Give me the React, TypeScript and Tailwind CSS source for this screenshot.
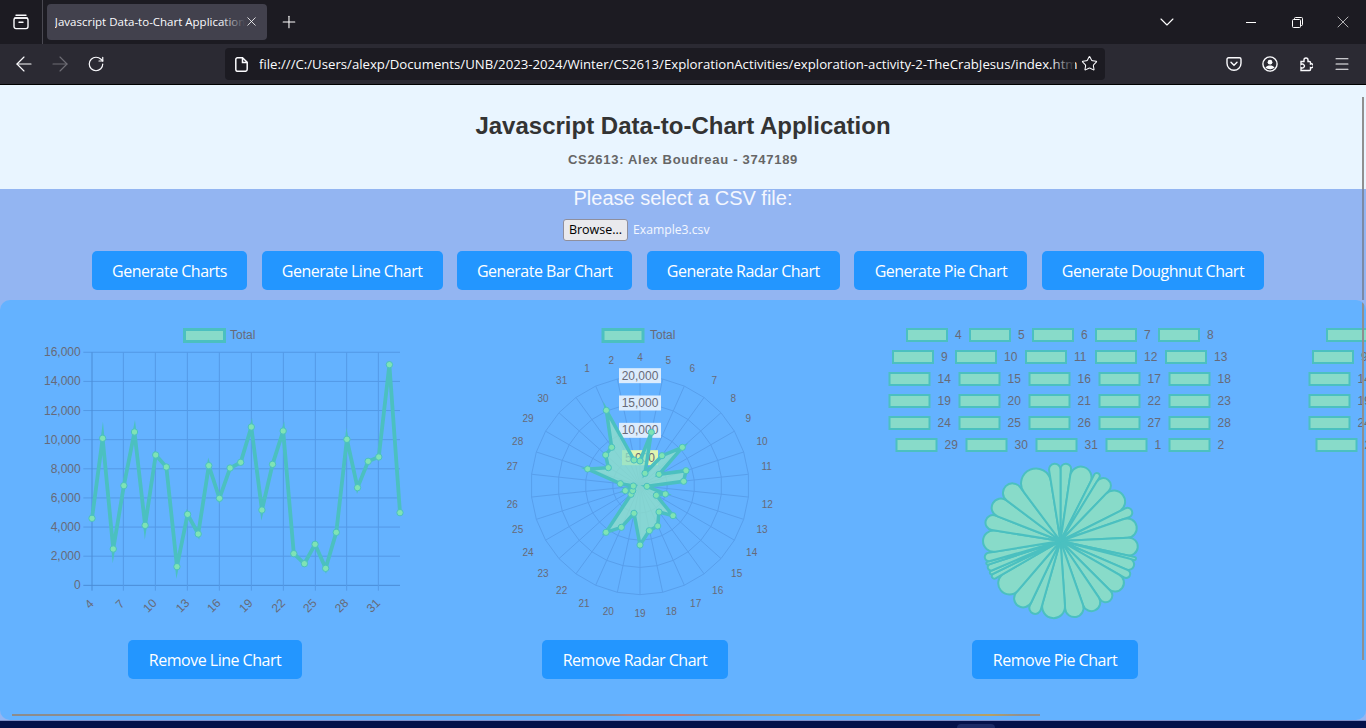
import { ArrowLeft, ArrowRight, ChevronDown, Menu, Plus, RotateCw, Star, X } from "lucide-react";

const zLine: number[] = [595, 355, 687, 497, 336, 616, 405, 441, 740, 583, 642, 437, 535, 444, 427, 321, 570, 433, 333, 701, 731, 673, 745, 637, 358, 503, 424, 411, 134, 578];
const labels: string[] = [...Array.from({ length: 28 }, (_, i) => String(i + 4)), "1", "2"];
const values: number[] = zLine.map((z) => ((796 - z) / 699) * 16000);

const TEAL = "#4bc0c0";
const FILL = "#88dbc9";
const POINT = "#7fe3b4";
const GRID = "#5399e6";
const RGRID = "#589fec";
const TXT = "#676a78";
const font = "'Liberation Sans', Arial, sans-serif";

const lx = (zx: number) => 25 + zx / 3;
const ly = (zy: number) => 20 + zy / 3;
const rx = (zx: number) => 65 + zx / 3;

function T({ x, y, children, anchor = "start", size = 12, transform }: { x: number; y: number; children: React.ReactNode; anchor?: "start" | "middle" | "end"; size?: number; transform?: string }) {
  return (
    <text x={x} y={y} textAnchor={anchor} fontSize={size} fontFamily={font} fill={TXT} dominantBaseline="central" transform={transform}>
      {children}
    </text>
  );
}

function LineChart() {
  const xs = zLine.map((_, i) => 186 + (i * (1110 - 186)) / 29);
  const pts = zLine.map((z, i) => `${lx(xs[i])},${ly(z)}`).join(" ");
  const xTicks: [string, number, number, number][] = [
    ["4", 186, 178, 852], ["7", 280, 270, 852], ["10", 376, 360, 857], ["13", 472, 458, 857], ["16", 568, 552, 857],
    ["19", 664, 648, 857], ["22", 760, 745, 857], ["25", 856, 840, 857], ["28", 950, 935, 857], ["31", 1045, 1030, 857],
  ];
  return (
    <svg viewBox="0 0 420 340" className="block h-[340px] w-[420px] overflow-visible">
      <rect x="179.5" y="29.5" width="40" height="12" fill={FILL} stroke={TEAL} strokeWidth="3" />
      <T x={225} y={35}>Total</T>
      {Array.from({ length: 9 }, (_, i) => {
        const y = ly(796 - i * 87.4);
        return (
          <g key={i}>
            <line x1={lx(160)} x2={lx(1110)} y1={y} y2={y} stroke={i === 0 ? "#4a8cd6" : GRID} strokeWidth="1" />
            <T x={lx(152)} y={y} anchor="end">{(i * 2000).toLocaleString("en-US")}</T>
          </g>
        );
      })}
      {xTicks.map(([t, gx, tx, ty], i) => (
        <g key={t}>
          <line x1={lx(gx)} x2={lx(gx)} y1={ly(97)} y2={ly(812)} stroke={i === 0 ? "#4a8cd6" : GRID} strokeWidth="1" />
          <T x={lx(tx)} y={ly(ty)} anchor="middle" transform={`rotate(-45 ${lx(tx)} ${ly(ty)})`}>{t}</T>
        </g>
      ))}
      <polyline points={pts} fill="none" stroke={TEAL} strokeWidth="3.8" strokeLinejoin="miter" strokeMiterlimit="10" />
      {zLine.map((z, i) => (
        <circle key={i} cx={lx(xs[i])} cy={ly(z)} r="3.2" fill={POINT} stroke={TEAL} strokeWidth="1" />
      ))}
    </svg>
  );
}

const radarPts: [number, number][] = [
  [450, 423], [484, 337], [465, 460], [516, 407], [577, 382], [507, 463], [588, 452], [581, 484], [471, 499], [526, 522],
  [499, 526], [549, 587], [507, 576], [503, 618], [478, 632], [450, 675], [432, 580], [394, 622], [348, 637], [423, 523],
  [428, 512], [406, 512], [430, 498], [391, 491], [293, 447], [355, 443], [347, 405], [365, 382], [349, 271], [432, 420],
];
const radarLabels: [string, number, number][] = [
  ["4", 450, 113], ["5", 535, 122], ["6", 607, 146], ["7", 673, 181], ["8", 730, 236], ["9", 775, 295], ["10", 816, 365], ["11", 830, 440],
  ["12", 832, 553], ["13", 816, 628], ["14", 785, 697], ["15", 740, 760], ["16", 683, 812], ["17", 617, 850], ["18", 544, 875], ["19", 450, 880],
  ["20", 355, 875], ["21", 282, 850], ["22", 215, 812], ["23", 159, 760], ["24", 114, 697], ["25", 83, 628], ["26", 67, 553], ["27", 67, 440],
  ["28", 83, 365], ["29", 114, 295], ["30", 159, 236], ["31", 215, 181], ["1", 291, 146], ["2", 364, 122],
];

function RadarChart() {
  const cx = 215;
  const cy = ly(497);
  const ring = (r: number) =>
    Array.from({ length: 30 }, (_, i) => {
      const a = (i * 12 * Math.PI) / 180;
      return `${cx + r * Math.sin(a)},${cy - r * Math.cos(a)}`;
    }).join(" ");
  return (
    <svg viewBox="0 0 420 340" className="block h-[340px] w-[420px] overflow-visible">
      <rect x="178" y="29.5" width="40" height="12" fill={FILL} stroke={TEAL} strokeWidth="3" />
      <T x={225} y={35}>Total</T>
      {[27.25, 54.5, 81.75, 109].map((r) => (
        <polygon key={r} points={ring(r)} fill="none" stroke={RGRID} strokeWidth="1" />
      ))}
      {Array.from({ length: 30 }, (_, i) => {
        const a = (i * 12 * Math.PI) / 180;
        return <line key={i} x1={cx} y1={cy} x2={cx + 109 * Math.sin(a)} y2={cy - 109 * Math.cos(a)} stroke={RGRID} strokeWidth="1" />;
      })}
      {[["5,000", 413, "#e0f5b0"], ["10,000", 331, "#dcecfd"], ["15,000", 249, "#dcecfd"], ["20,000", 167, "#dcecfd"]].map(([t, z, c]) => (
        <g key={t as string}>
          <rect x={t === "5,000" ? cx - 18 : cx - 21} y={ly(z as number) - 7.5} width={t === "5,000" ? 36 : 42} height="15" fill={c as string} />
          <T x={cx} y={ly(z as number)} anchor="middle">{t}</T>
        </g>
      ))}
      <polygon points={radarPts.map(([x, y]) => `${rx(x)},${ly(y)}`).join(" ")} fill="#8fe0c8" fillOpacity="0.78" stroke={TEAL} strokeWidth="3.5" strokeMiterlimit="6" />
      {radarPts.map(([x, y], i) => (
        <circle key={i} cx={rx(x)} cy={ly(y)} r="3.1" fill={POINT} stroke={TEAL} strokeWidth="1" />
      ))}
      {radarLabels.map(([t, x, y]) => (
        <T key={t} x={rx(x)} y={ly(y)} anchor="middle" size={10}>{t}</T>
      ))}
    </svg>
  );
}

function sliceParts() {
  const total = values.reduce((a, b) => a + b, 0);
  const R = 77.5;
  let ang = 0;
  return values.map((v) => {
    const da = (v / total) * Math.PI * 2;
    const a0 = ang;
    const a1 = ang + da;
    ang = a1;
    const s = Math.sin(da / 2);
    const r = Math.min(15, (R * s) / (1 + s));
    const d = Math.sqrt((R - r) * (R - r) - r * r);
    const delta = Math.asin(r / (R - r));
    const p = (rad: number, a: number) => `${(rad * Math.sin(a)).toFixed(2)} ${(-rad * Math.cos(a)).toFixed(2)}`;
    return `M0 0 L${p(d, a0)} A${r} ${r} 0 0 1 ${p(R, a0 + delta)} A${R} ${R} 0 0 1 ${p(R, a1 - delta)} A${r} ${r} 0 0 1 ${p(d, a1)} Z`;
  });
}

function PieLegend() {
  const rows = [labels.slice(0, 5), labels.slice(5, 10), labels.slice(10, 15), labels.slice(15, 20), labels.slice(20, 25), labels.slice(25, 30)];
  const w = (l: string) => (l.length === 1 ? 63 : 70);
  return (
    <>
      {rows.map((row, ri) => {
        const total = row.reduce((a, l) => a + w(l), 0) - 7;
        let x = 215 - total / 2;
        const y = 35 + ri * 22;
        return row.map((l) => {
          const bx = x;
          x += w(l);
          return (
            <g key={l}>
              <rect x={bx + 1} y={y - 6} width="40" height="12" fill={FILL} stroke={TEAL} strokeWidth="2" />
              <T x={bx + 49} y={y}>{l}</T>
            </g>
          );
        });
      })}
    </>
  );
}

function PieChart({ pie = true }: { pie?: boolean }) {
  return (
    <svg viewBox="0 0 420 340" className="block h-[340px] w-[420px] overflow-visible">
      <PieLegend />
      {pie && (
        <g transform="translate(215.5 241)">
          {sliceParts().map((d, i) => (
            <path key={i} d={d} fill={FILL} stroke={TEAL} strokeWidth="2" strokeLinejoin="round" />
          ))}
        </g>
      )}
    </svg>
  );
}

function Btn({ w, children }: { w: string; children: React.ReactNode }) {
  return (
    <button className={`h-[39px] shrink-0 rounded-[5px] bg-[#2396ff] text-center font-['Open_Sans',sans-serif] text-[16px] tracking-[-0.5px] text-white ${w}`}>
      {children}
    </button>
  );
}

function Column({ children, label, w }: { children: React.ReactNode; label?: string; w?: string }) {
  return (
    <div className="flex w-[420px] shrink-0 flex-col items-center">
      {children}
      {label && <Btn w={w ?? ""}>{label}</Btn>}
    </div>
  );
}

export default function App() {
  return (
    <div className="relative flex h-[728px] w-[1366px] flex-col overflow-hidden bg-[#93b5f2] font-['Liberation_Sans',Arial,sans-serif]">
      {/* tab strip */}
      <div className="flex h-[44px] shrink-0 items-center bg-[#1c1b22] text-white">
        <div className="flex h-full w-[43px] items-center justify-center border-r border-[#4a4952]">
          <svg width="16" height="16" viewBox="0 0 16 16" fill="none" stroke="#fbfbfe" strokeWidth="1.4">
            <path d="M3 1.2h10M1.8 4h12.4" strokeLinecap="round" />
            <rect x="1" y="4" width="14" height="10.6" rx="2" />
            <path d="M6 8.2h4" strokeLinecap="round" />
          </svg>
        </div>
        <div className="relative ml-[4px] flex h-[36px] w-[221px] items-center overflow-hidden rounded-[4px] bg-[#42414d] pl-[8px]">
          <span className="w-[191px] overflow-hidden whitespace-nowrap font-['Open_Sans',sans-serif] text-[11.5px] text-[#fbfbfe]">Javascript Data-to-Chart Application</span>
          <div className="absolute right-[22px] top-0 h-full w-[24px] bg-gradient-to-r from-transparent to-[#42414d]" />
          <X className="absolute right-[8px] top-[10px]" size={15} strokeWidth={1.3} />
        </div>
        <Plus className="ml-[12px]" size={20} strokeWidth={1.3} />
        <ChevronDown className="ml-[856px]" size={24} strokeWidth={1.1} />
        <div className="ml-[49px] flex items-center">
          <div className="flex w-[46px] justify-center"><div className="h-px w-[10px] bg-white" /></div>
          <div className="flex w-[46px] justify-center">
            <svg width="11" height="11" viewBox="0 0 11 11" fill="none" stroke="#fff" strokeWidth="1">
              <rect x="0.5" y="2.5" width="8" height="8" rx="1" />
              <path d="M2.5 2.5V1.5a1 1 0 0 1 1-1h6a1 1 0 0 1 1 1v6a1 1 0 0 1-1 1H8.5" />
            </svg>
          </div>
          <div className="flex w-[46px] justify-center"><X size={20} strokeWidth={0.8} /></div>
        </div>
      </div>
      {/* toolbar */}
      <div className="flex h-[41px] shrink-0 items-center border-b border-black bg-[#2b2a33] text-[#fbfbfe]">
        <ArrowLeft className="ml-[12px]" size={24} strokeWidth={1.15} />
        <ArrowRight className="ml-[12px] text-[#6e6d75]" size={24} strokeWidth={1.15} />
        <RotateCw className="ml-[15px]" size={18} strokeWidth={1.6} />
        <div className="relative ml-[120px] flex h-[32px] w-[880px] items-center overflow-hidden rounded-[4px] bg-[#1c1b22] pl-[10px]">
          <svg width="13" height="15" viewBox="0 0 13 15" fill="none" stroke="#fbfbfe" strokeWidth="1.5">
            <path d="M2.5.8h5l4.7 4.5v7a2 2 0 0 1-2 2h-7.7a1.7 1.7 0 0 1-1.7-1.7V2.5A1.7 1.7 0 0 1 2.5.8zM7.5 1v4.5h4.5" />
          </svg>
          <span className="ml-[11px] w-[818px] overflow-hidden whitespace-nowrap pt-px font-['Open_Sans',sans-serif] text-[13.2px] text-[#fbfbfe]">
            file:///C:/Users/alexp/Documents/UNB/2023-2024/Winter/CS2613/ExplorationActivities/exploration-activity-2-TheCrabJesus/index.html
          </span>
          <div className="absolute right-[30px] top-0 h-full w-[24px] bg-gradient-to-r from-transparent to-[#1c1b22]" />
          <Star className="absolute right-[7px] top-[7px]" size={17} strokeWidth={1.5} />
        </div>
        <svg className="ml-[121px]" width="16" height="16" viewBox="0 0 16 16" fill="none" stroke="#fbfbfe" strokeWidth="1.4">
          <path d="M2.5 1.7h11a1.5 1.5 0 0 1 1.5 1.5v4a7 7 0 0 1-14 0v-4a1.5 1.5 0 0 1 1.5-1.5z" />
          <path d="M5 6.2l3 3 3-3" strokeLinecap="round" />
        </svg>
        <svg className="ml-[20px]" width="16" height="16" viewBox="0 0 16 16" fill="none">
          <circle cx="8" cy="8" r="7.1" stroke="#fbfbfe" strokeWidth="1.4" />
          <circle cx="8" cy="6.2" r="2.4" fill="#fbfbfe" />
          <path d="M3.4 11.6c1-1.6 2.7-2.2 4.6-2.2s3.6.6 4.6 2.2c-1.2 1.1-2.8 1.7-4.6 1.7s-3.4-.6-4.6-1.7z" fill="#fbfbfe" />
        </svg>
        <svg className="ml-[20px]" width="15" height="16" viewBox="0 0 15 16" fill="none" stroke="#fbfbfe" strokeWidth="1.4">
          <path d="M1 6h3V4.5a2 2 0 1 1 4 0V6h1.5a1 1 0 0 1 1 1v1.5a2 2 0 1 1 0 3.6V14a1 1 0 0 1-1 1H1v-3a2 2 0 1 0 0-3z" transform="translate(2 -.5)" />
        </svg>
        <Menu className="ml-[20px]" size={18} strokeWidth={1.4} />
      </div>
      {/* header */}
      <div className="flex h-[104px] shrink-0 flex-col items-center bg-[#e9f5ff]">
        <h1 className="mt-[27px] text-[24px] font-bold leading-[28px] text-[#333]">Javascript Data-to-Chart Application</h1>
        <p className="mt-[12px] text-[13px] font-bold leading-[16px] tracking-[0.7px] text-[#666]">CS2613: Alex Boudreau - 3747189</p>
      </div>
      {/* controls */}
      <div className="flex h-[111px] shrink-0 flex-col items-center bg-[#93b5f2]">
        <p className="text-[20px] leading-[18px] text-[#f4f7fe]">Please select a CSV file:</p>
        <div className="mt-[12px] flex h-[22px] w-[240px] items-center self-center">
          <div className="flex h-[22px] w-[65px] items-center justify-center rounded-[3px] border border-[#8f8f9d] bg-[#e9e9ed] pt-px font-['Open_Sans',sans-serif] text-[12.5px] text-black">Browse...</div>
          <span className="ml-[5px] pt-px font-['Open_Sans',sans-serif] text-[12.2px] text-[#f4f7fe]">Example3.csv</span>
        </div>
        <div className="mr-[10px] mt-[10px] flex gap-[14.6px]">
          <Btn w="w-[155px]">Generate Charts</Btn>
          <Btn w="w-[181px]">Generate Line Chart</Btn>
          <Btn w="w-[175px]">Generate Bar Chart</Btn>
          <Btn w="w-[193px]">Generate Radar Chart</Btn>
          <Btn w="w-[173px]">Generate Pie Chart</Btn>
          <Btn w="w-[222px]">Generate Doughnut Chart</Btn>
        </div>
      </div>
      {/* charts panel */}
      <div className="relative h-[420px] shrink-0 overflow-hidden rounded-[10px] bg-[#64b2ff]">
        <div className="flex w-[1690px] pl-[5px]">
          <Column label="Remove Line Chart" w="w-[174px]"><LineChart /></Column>
          <Column label="Remove Radar Chart" w="w-[186px]"><RadarChart /></Column>
          <Column label="Remove Pie Chart" w="w-[166px]"><PieChart /></Column>
          <Column><PieChart pie={false} /></Column>
        </div>
        <div className="absolute bottom-[4px] left-[12px] h-[2px] w-[1028px] bg-[linear-gradient(90deg,#8c8c8c_58%,#b98080_60%,#c47878_65%,#909090_67%,#a59c80_75%,#a59c80_92%,#b8a060_95%,#909090_98%)]" />
        <div className="absolute right-[2px] top-0 h-[360px] w-[2px] bg-[#8f8f8f]" />
      </div>
      {/* desktop strip */}
      <div className="relative h-[8px] shrink-0 border-t border-[#7f8fc8] bg-[#05114a]">
        <div className="absolute left-[957px] top-[3px] h-[5px] w-[38px] rounded-t-[4px] bg-[#1c2a66]" />
      </div>
      <div className="absolute right-[2px] top-[97px] h-[92px] w-[2px] bg-[#8f8f8f]" />
      <div className="absolute right-[2px] top-[189px] h-[111px] w-[2px] bg-[#7d8aa5]" />
    </div>
  );
}
